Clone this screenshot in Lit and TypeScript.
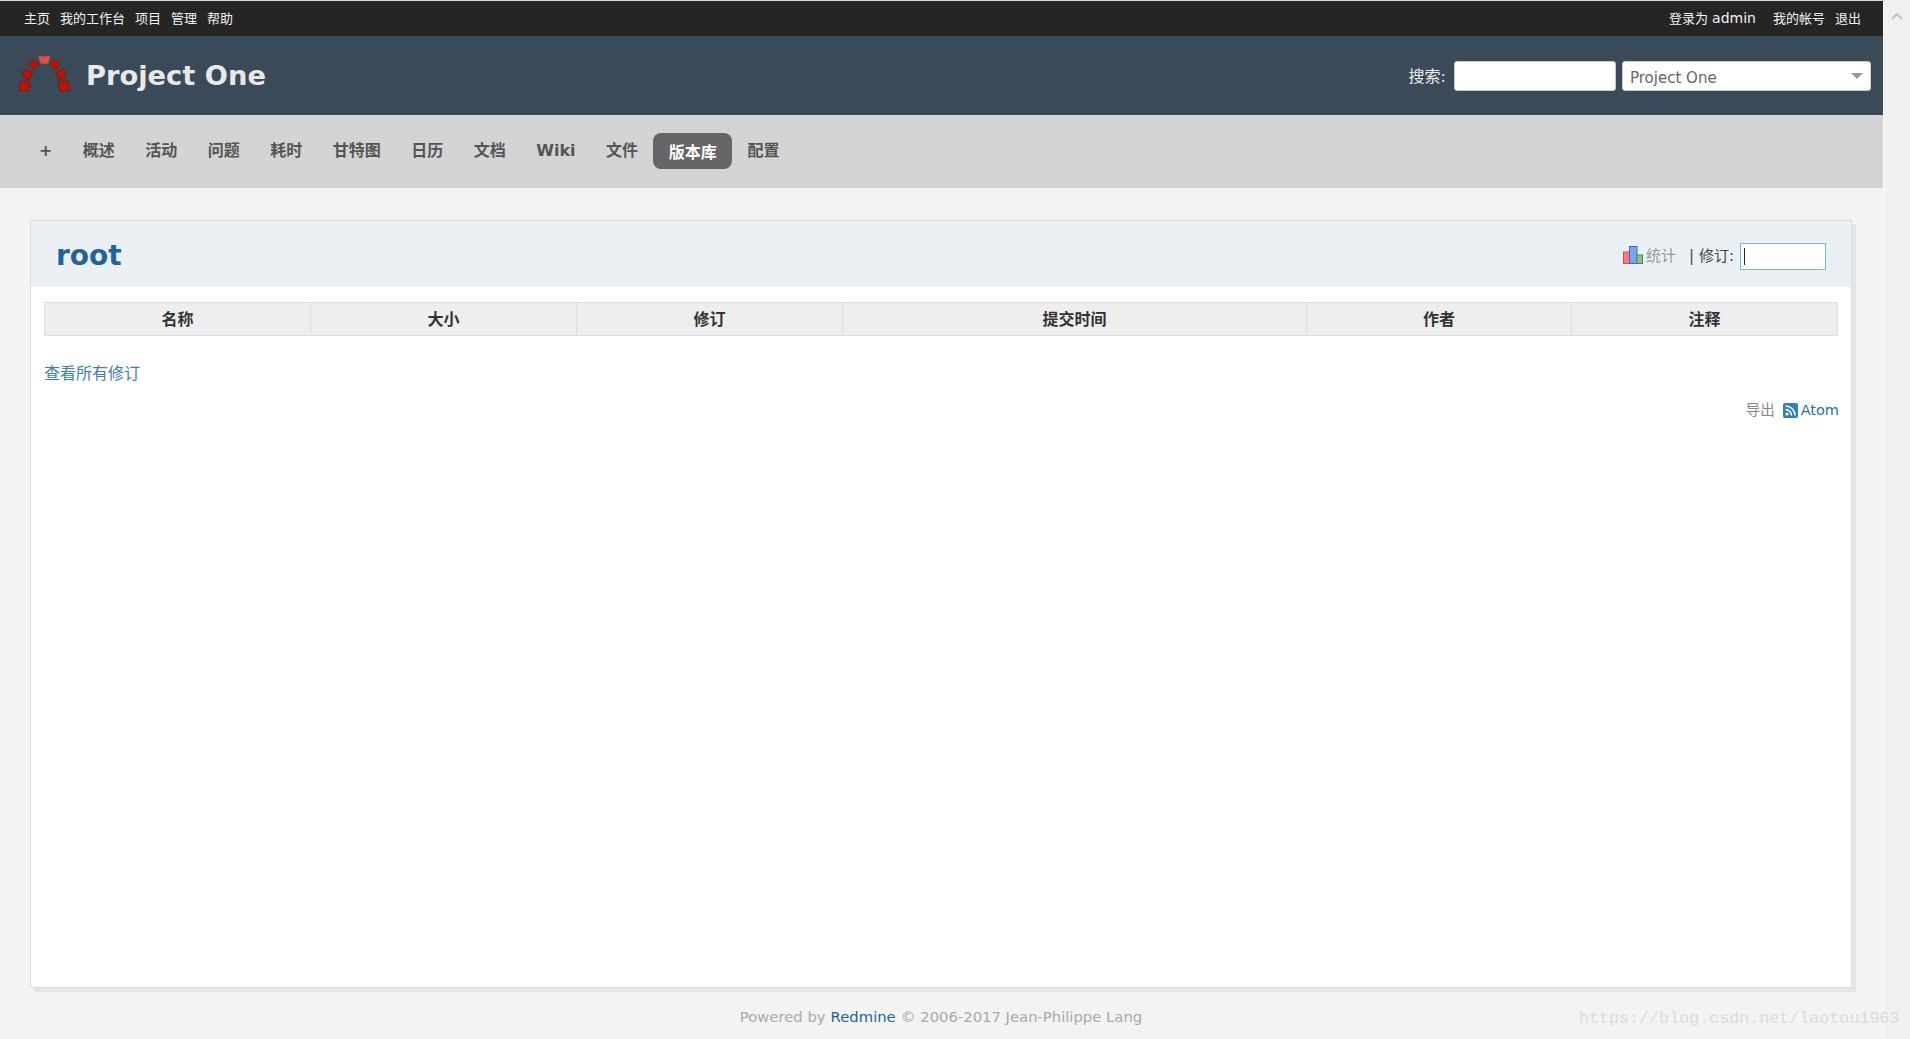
import { LitElement, html, css } from "lit";
import { customElement } from "lit/decorators.js";

const LEFT = ["主页", "我的工作台", "项目", "管理", "帮助"];
const TABS = ["概述", "活动", "问题", "耗时", "甘特图", "日历", "文档", "Wiki", "文件"];
const COLS = [
  ["名称", 266], ["大小", 266], ["修订", 266], ["提交时间", 464], ["作者", 265], ["注释", 266],
] as const;

@customElement("app-root")
export class AppRoot extends LitElement {
  static styles = css`
    :host {
      display: block;
      position: relative;
      width: 1910px;
      height: 1039px;
      overflow: hidden;
      background: #f3f3f3;
      font-family: "DejaVu Sans", "Noto Sans CJK SC", sans-serif;
      color: #484848;
    }
    a { text-decoration: none; color: inherit; }
    .shell { display: flex; height: 1039px; }
    .page { width: 1883px; display: flex; flex-direction: column; }
    .scroll {
      width: 27px;
      box-sizing: border-box;
      background: #f1f1f1;
      border-left: 1px solid #fafafa;
      display: flex;
      justify-content: center;
      padding-top: 13px;
    }
    .top {
      height: 36px;
      box-sizing: border-box;
      border-top: 1px solid #d8d8d8;
      background: #252525;
      color: #f2f2f2;
      font-size: 13px;
      display: flex;
      align-items: center;
      justify-content: space-between;
      padding: 0 22px 3px 24px;
    }
    .links { display: flex; gap: 10px; align-items: center; }
    .links.right { gap: 17px; }
    .links.right .out { margin-left: -7px; }
    .who b { font-weight: 400; font-size: 14px; }
    .head {
      height: 79px;
      background: #3b4a58;
      display: flex;
      align-items: center;
      padding: 0 12px 0 17px;
    }
    .logo { width: 56px; height: 38px; margin: -3px 13px 0 0; }
    h1 {
      margin: 0;
      font-size: 27.3px;
      font-weight: 700;
      color: #e8e8e8;
      flex: 1;
      line-height: 1;
    }
    .search { display: flex; align-items: center; color: #eee; font-size: 16px; margin-top: 1px; }
    .search .lbl { position: relative; top: -1px; }
    .field {
      box-sizing: border-box;
      height: 30px;
      background: #fff;
      border-radius: 3px;
      border: 1px solid #ccc;
    }
    .q { width: 162px; margin: 0 6px 0 8px; }
    .sel {
      width: 249px;
      display: flex;
      align-items: center;
      justify-content: space-between;
      padding: 3px 7px 0 7px;
      color: #666;
      font-size: 15px;
    }
    .tri { width: 0; height: 0; margin-top: -3px; border: 6px solid transparent; border-top: 6px solid #999; border-bottom: 0; }
    .nav {
      height: 73px;
      background: #d4d4d4;
      display: flex;
      align-items: center;
      padding: 0 15px 0 24px;
      font-size: 16px;
      font-weight: 700;
      color: #555;
    }
    .tab { padding: 0 15.25px; line-height: 22px; margin-bottom: 1px; }
    .tab.plus { padding: 0 15px; }
    .tab.on {
      background: #666;
      color: #fff;
      border-radius: 8px;
      height: 36px;
      line-height: 40px;
      padding: 0 14px;
      margin: 0 0 2px;
      box-sizing: border-box;
      width: 79px;
      text-align: center;
    }
    .main { flex: 1; padding: 32px 31px 0 30px; display: flex; flex-direction: column; }
    .box {
      height: 768px;
      box-sizing: border-box;
      background: #fff;
      border: 1px solid #dcdcdc;
      box-shadow: 4px 4px 0 #e4e4e4;
    }
    .band {
      height: 66px;
      background: #eaf0f4;
      display: flex;
      align-items: center;
      justify-content: space-between;
      padding: 0 25px 0 25px;
    }
    h2 { margin: 4px 0 0; font-size: 28px; font-weight: 700; color: #1f6398; line-height: 1; }
    .ctx { display: flex; align-items: center; font-size: 15px; color: #444; margin-top: 2px; }
    .ctx svg { margin-right: 3px; }
    .ctx .txt { position: relative; top: -1px; }
    .stat { color: #999; margin-right: 13px; }
    .rev {
      width: 86px;
      height: 27px;
      box-sizing: border-box;
      margin: 2px 0 0 6px;
      border: 1px solid #7fb5cf;
      background: #fff;
      display: flex;
      align-items: center;
      padding-left: 3px;
    }
    .caret { width: 1px; height: 17px; background: #222; }
    table {
      margin: 15px 0 0 13px;
      border-collapse: collapse;
      table-layout: fixed;
      width: 1793px;
    }
    th {
      height: 33px;
      box-sizing: border-box;
      padding: 0 0 2px;
      background: #eee;
      border: 1px solid #dedede;
      font-size: 16px;
      font-weight: 700;
      color: #333;
      text-align: center;
    }
    .all {
      display: block;
      margin: 26px 0 0 13px;
      font-size: 16px;
      line-height: 24px;
      color: #3f7eb5;
    }
    .other {
      margin: 14px 12px 0 0;
      display: flex;
      justify-content: flex-end;
      align-items: center;
      font-size: 14.5px;
      color: #888;
      line-height: 20px;
    }
    .other svg { margin: 0 3px 0 8px; }
    .other a { color: #2a72aa; }
    .foot {
      flex: 1;
      display: flex;
      justify-content: center;
      align-items: center;
      font-size: 14.8px;
      color: #aaa;
      margin-top: 5px;
    }
    .foot a { color: #1f6398; margin: 0 5px; }
    .mark {
      position: absolute;
      left: 1579px;
      top: 1009px;
      font-family: "Liberation Mono", monospace;
      font-size: 16.7px;
      line-height: 20px;
      color: #dcdcd8;
      white-space: nowrap;
    }
  `;

  render() {
    return html`
      <div class="shell">
        <div class="page">
          <div class="top">
            <div class="links">${LEFT.map((t) => html`<a href="#">${t}</a>`)}</div>
            <div class="links right">
              <span class="who">登录为 <b>admin</b></span>
              <a href="#">我的帐号</a>
              <a href="#" class="out">退出</a>
            </div>
          </div>
          <div class="head">
            <svg class="logo" viewBox="50 45 165 110" aria-hidden="true">
              <g fill="#b81408" stroke="#7c0f08" stroke-width="2" stroke-linejoin="round">
                <polygon points="60,120 88,122 84,152 55,150"></polygon>
                <polygon points="200,120 172,122 176,152 205,150"></polygon>
                <polygon points="72,85 96,94 88,116 65,108"></polygon>
                <polygon points="188,85 164,94 172,116 195,108"></polygon>
                <polygon points="97,57 115,72 100,88 83,72"></polygon>
                <polygon points="163,57 145,72 160,88 177,72"></polygon>
              </g>
              <polygon points="113,48 148,48 142,70 120,70" fill="#e2503f"></polygon>
            </svg>
            <h1>Project One</h1>
            <div class="search">
              <span class="lbl">搜索:</span>
              <div class="field q"></div>
              <div class="field sel"><span>Project One</span><span class="tri"></span></div>
            </div>
          </div>
          <div class="nav">
            <a class="tab plus" href="#">+</a>
            ${TABS.map((t) => html`<a class="tab" href="#">${t}</a>`)}
            <a class="tab on" href="#">版本库</a>
            <a class="tab" href="#">配置</a>
          </div>
          <div class="main">
            <div class="box">
              <div class="band">
                <h2>root</h2>
                <div class="ctx">
                  <svg width="20" height="18" viewBox="0 0 20 18" aria-hidden="true">
                    <rect x="0.5" y="6" width="6" height="11.5" fill="#f57c7c" stroke="#d84a4a"></rect>
                    <rect x="6.5" y="0.5" width="7.5" height="17" fill="#7aa5ea" stroke="#3a62c8"></rect>
                    <rect x="14" y="9" width="5.5" height="8.5" fill="#8cc08c" stroke="#4c8c54"></rect>
                  </svg>
                  <a class="stat txt" href="#">统计</a>
                  <span class="txt">| 修订:</span>
                  <div class="rev"><span class="caret"></span></div>
                </div>
              </div>
              <table>
                <colgroup>${COLS.map((c) => html`<col style="width:${c[1]}px" />`)}</colgroup>
                <thead><tr>${COLS.map((c) => html`<th>${c[0]}</th>`)}</tr></thead>
              </table>
              <a class="all" href="#">查看所有修订</a>
              <div class="other">
                <span>导出</span>
                <svg width="15" height="15" viewBox="0 0 15 15" aria-hidden="true">
                  <rect width="15" height="15" rx="2" fill="#2f80c0"></rect>
                  <circle cx="4" cy="11" r="1.6" fill="#fff"></circle>
                  <path d="M2.5 6.5a6 6 0 0 1 6 6M2.5 3a9.5 9.5 0 0 1 9.5 9.5" fill="none" stroke="#fff" stroke-width="1.6"></path>
                </svg>
                <a href="#">Atom</a>
              </div>
            </div>
            <div class="foot">Powered by <a href="#">Redmine</a> © 2006-2017 Jean-Philippe Lang</div>
          </div>
        </div>
        <div class="scroll">
          <svg width="12" height="7" viewBox="0 0 12 7" aria-hidden="true">
            <path d="M1 6l5-5 5 5" fill="none" stroke="#c4c4c4" stroke-width="2"></path>
          </svg>
        </div>
      </div>
      <div class="mark">https://blog.csdn.net/laotou1963</div>
    `;
  }
}
